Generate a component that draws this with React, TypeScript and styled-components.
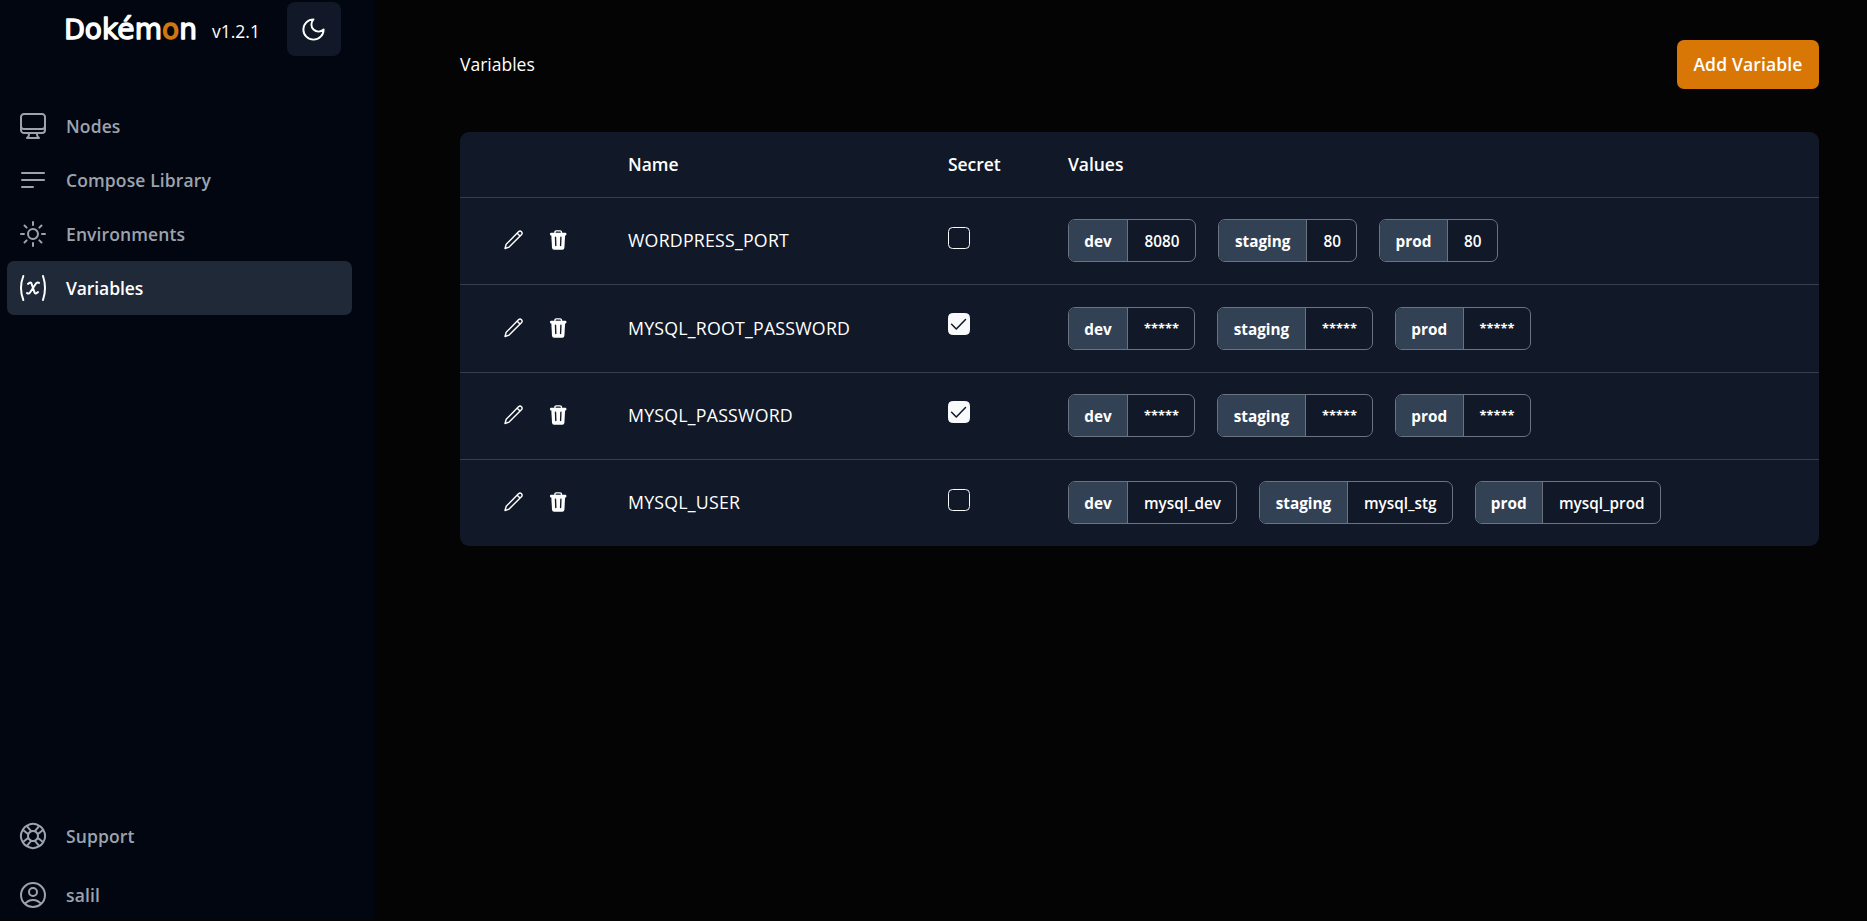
import React from "react";
import styled, { createGlobalStyle } from "styled-components";
import {
  HiOutlineBars3BottomLeft,
  HiOutlineComputerDesktop,
  HiOutlineLifebuoy,
  HiOutlineSun,
  HiOutlineUserCircle,
  HiOutlineVariable,
} from "react-icons/hi2";

const GlobalStyle = createGlobalStyle`
  *, *::before, *::after { box-sizing: border-box; }
  body {
    margin: 0;
    background: #040404;
    color: #fff;
    font-family: "Open Sans", "Noto Sans", sans-serif;
    font-size: 17.5px;
    line-height: 27px;
  }
  button { font: inherit; color: inherit; border: 0; background: none; padding: 0; }
`;

const Page = styled.div`
  display: flex;
  height: 921px;
  overflow: hidden;
`;

/* Sidebar */

const Sidebar = styled.aside`
  display: flex;
  flex-direction: column;
  flex: none;
  width: 375px;
  height: 920px;
  padding: 2px 23px 0 7px;
  background: #020610;
`;

const Brand = styled.header`
  display: flex;
  align-items: flex-start;
  height: 97px;
  padding-left: 57px;
`;

const Logo = styled.svg`
  flex: none;
  width: 136px;
  height: 44px;
  overflow: visible;
`;

const LogoText = styled.text`
  font-family: "DejaVu Sans", sans-serif;
  font-size: 28px;
  letter-spacing: 0.1px;
  fill: #fff;
  stroke: #fff;
  stroke-width: 1.4px;
  stroke-linejoin: round;
`;

const LogoInitial = styled.tspan`
  font-size: 26.6px;
`;

const LogoAccent = styled.tspan`
  fill: #d0780f;
  stroke: #d0780f;
`;

const Version = styled.span`
  width: 75px;
  padding: 16px 0 0 12px;
  font-size: 17.5px;
`;

const ThemeButton = styled.button`
  display: grid;
  place-items: center;
  width: 54px;
  height: 54px;
  margin-left: 12px;
  padding-right: 1px;
  border-radius: 8px;
  background: #111827;
`;

const Nav = styled.nav`
  display: flex;
  flex-direction: column;
  flex: 1;
`;

const FooterNav = styled.nav`
  display: flex;
  flex-direction: column;
  gap: 5px;
  margin-bottom: -2px;
`;

const NavItem = styled.a<{ $active?: boolean }>`
  display: flex;
  align-items: center;
  gap: 17px;
  height: 54px;
  padding-left: 10px;
  border-radius: 7px;
  font-weight: 600;
  letter-spacing: ${(p) => (p.$active ? "-0.1px" : "0.12px")};
  color: ${(p) => (p.$active ? "#fff" : "#9ca3af")};
  background: ${(p) => (p.$active ? "#1f2937" : "transparent")};

  svg { width: 32px; height: 32px; flex: none; }
`;

/* Main area */

const Main = styled.main`
  flex: 1;
  padding: 40px 48px 0 85px;
`;

const TopBar = styled.div`
  display: flex;
  align-items: center;
  justify-content: space-between;
  height: 49px;
  margin-bottom: 43px;
`;

const Title = styled.h1`
  margin: 0;
  font-size: 17.5px;
  font-weight: 400;
`;

const AddButton = styled.button`
  width: 142px;
  height: 49px;
  border-radius: 7px;
  background: #d97706;
  font-weight: 600;
  letter-spacing: 0.15px;
`;

const Table = styled.div`
  overflow: hidden;
  border-radius: 9px;
  background: #111827;
`;

const columns = "168px 320px 120px 1fr";

const HeadRow = styled.div`
  display: grid;
  grid-template-columns: ${columns};
  align-items: center;
  height: 66px;
  border-bottom: 1px solid #353f4e;
  font-weight: 600;
  letter-spacing: -0.05px;
`;

const Row = styled.div`
  display: grid;
  grid-template-columns: ${columns};
  align-items: start;
  height: 87.3px;
  border-bottom: 1px solid #353f4e;

  &:last-child { height: 86.1px; border-bottom: 0; }
`;

const Actions = styled.div`
  display: flex;
  gap: 27px;
  padding: 32.3px 0 0 44px;

  svg { display: block; }
`;

const Name = styled.span`
  padding-top: 29.3px;
  font-size: 17.75px;
  letter-spacing: 0.22px;
`;

const Checkbox = styled.button<{ $checked: boolean }>`
  display: block;
  width: 22px;
  height: 22px;
  margin-top: ${(p) => (p.$checked ? "28px" : "29.3px")};
  border: 1px solid #f8fafc;
  border-radius: 4.5px;
  background: ${(p) => (p.$checked ? "#f8fafc" : "transparent")};

  svg { display: block; margin: -1px; }
`;

const Values = styled.div`
  display: flex;
  gap: 22px;
  padding-top: 21.3px;
`;

const Badge = styled.div`
  display: flex;
  height: 43px;
  border: 1px solid #6b7280;
  border-radius: 7px;
  overflow: hidden;
  font-size: 15.3px;
  line-height: 43px;
  text-align: center;
`;

const BadgeLabel = styled.span<{ $width: number }>`
  width: ${(p) => p.$width}px;
  border-right: 1px solid #6b7280;
  background: #334155;
  font-weight: 700;
`;

const BadgeValue = styled.span<{ $width: number; $masked: boolean }>`
  width: ${(p) => p.$width}px;
  padding-left: 1px;
  font-size: ${(p) => (p.$masked ? "12.8px" : "15.3px")};
  line-height: ${(p) => (p.$masked ? "41px" : "43px")};
  font-weight: ${(p) => (p.$masked ? 700 : 600)};
`;

const MoonIcon = () => (
  <svg width="27" height="27" viewBox="0 0 24 24" fill="none" stroke="#fff" strokeWidth="1.7" strokeLinecap="round" strokeLinejoin="round">
    <path d="M12 3a6 6 0 0 0 9 9 9 9 0 1 1-9-9Z" />
  </svg>
);

const PencilIcon = () => (
  <svg width="19" height="20" viewBox="0 0 19 20" fill="none" stroke="#fff" strokeWidth="1.4" strokeLinejoin="round">
    <path d="M1 18.5 2.2 14.2 14.7 1.6Q16.1.5 17.5 1.8 18.7 3.2 17.6 4.6L5.1 17.1Z" />
    <path d="m13.2 3.2 2.8 2.8" />
  </svg>
);

const TrashIcon = () => (
  <svg width="17" height="20" viewBox="0 0 17 20" fill="none">
    <path d="M4.9 3.4V2.3Q4.9.9 6.3.9h3.8q1.4 0 1.4 1.4v1.1" stroke="#fff" strokeWidth="1.4" />
    <rect x="0" y="2.8" width="16.4" height="2.6" rx="1" fill="#fff" />
    <path d="M1.3 5h13.8l-.7 12.8q-.2 2-2.1 2H4.1q-1.9 0-2.1-2Z" fill="#fff" />
    <path d="M5.5 7.2 5.8 15.6M10.9 7.2 10.6 15.6" stroke="#111827" strokeWidth="1.4" strokeLinecap="round" />
  </svg>
);

const CheckIcon = () => (
  <svg width="22" height="22" viewBox="0 0 22 22" fill="none" stroke="#0f172a" strokeWidth="1.5" strokeLinecap="round" strokeLinejoin="round">
    <path d="m3.6 11.3 4.7 4.7 9.2-9.5" />
  </svg>
);

const labels: [string, number][] = [["dev", 59], ["staging", 88], ["prod", 67.5]];

type Variable = { name: string; secret: boolean; values: [string, number][] };

const variables: Variable[] = [
  { name: "WORDPRESS_PORT", secret: false, values: [["8080", 67.2], ["80", 49], ["80", 49]] },
  { name: "MYSQL_ROOT_PASSWORD", secret: true, values: [["*****", 66], ["*****", 66], ["*****", 66]] },
  { name: "MYSQL_PASSWORD", secret: true, values: [["*****", 66], ["*****", 66], ["*****", 66]] },
  { name: "MYSQL_USER", secret: false, values: [["mysql_dev", 108], ["mysql_stg", 103.5], ["mysql_prod", 116.5]] },
];

export default function App() {
  return (
    <>
      <GlobalStyle />
      <Page>
        <Sidebar>
          <Brand>
            <Logo viewBox="0 0 136 44">
              <LogoText x="0.2" y="37.2">
                <LogoInitial>D</LogoInitial>okém<LogoAccent>o</LogoAccent>n
              </LogoText>
            </Logo>
            <Version>v1.2.1</Version>
            <ThemeButton aria-label="Toggle theme"><MoonIcon /></ThemeButton>
          </Brand>
          <Nav>
            <NavItem><HiOutlineComputerDesktop />Nodes</NavItem>
            <NavItem><HiOutlineBars3BottomLeft />Compose Library</NavItem>
            <NavItem><HiOutlineSun />Environments</NavItem>
            <NavItem $active><HiOutlineVariable />Variables</NavItem>
          </Nav>
          <FooterNav>
            <NavItem><HiOutlineLifebuoy />Support</NavItem>
            <NavItem><HiOutlineUserCircle />salil</NavItem>
          </FooterNav>
        </Sidebar>
        <Main>
          <TopBar>
            <Title>Variables</Title>
            <AddButton>Add Variable</AddButton>
          </TopBar>
          <Table>
            <HeadRow>
              <span />
              <span>Name</span>
              <span>Secret</span>
              <span>Values</span>
            </HeadRow>
            {variables.map((v) => (
              <Row key={v.name}>
                <Actions><PencilIcon /><TrashIcon /></Actions>
                <Name>{v.name}</Name>
                <Checkbox $checked={v.secret} aria-label="Secret">{v.secret && <CheckIcon />}</Checkbox>
                <Values>
                  {v.values.map(([value, width], i) => (
                    <Badge key={labels[i][0]}>
                      <BadgeLabel $width={labels[i][1]}>{labels[i][0]}</BadgeLabel>
                      <BadgeValue $width={width} $masked={v.secret}>{value}</BadgeValue>
                    </Badge>
                  ))}
                </Values>
              </Row>
            ))}
          </Table>
        </Main>
      </Page>
    </>
  );
}
